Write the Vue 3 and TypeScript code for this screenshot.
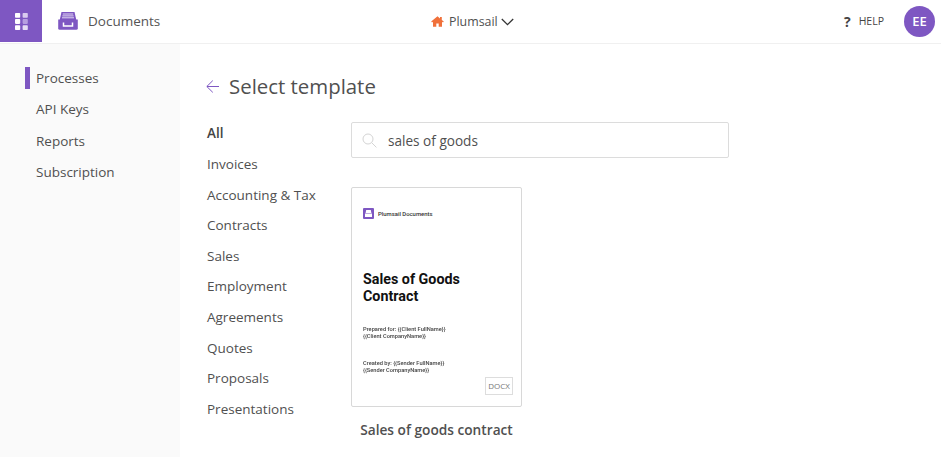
<script setup lang="ts">
const navItems: string[] = ['Processes', 'API Keys', 'Reports', 'Subscription']
const categories: string[] = ['All', 'Invoices', 'Accounting & Tax', 'Contracts', 'Sales', 'Employment', 'Agreements', 'Quotes', 'Proposals', 'Presentations']
</script>

<template>
  <div class="app">
    <header class="topbar">
      <div class="launcher">
        <svg width="13" height="17" viewBox="0 0 13 17">
          <rect x="0" y="0" width="5.2" height="4.8" rx="0.8" fill="#fff" />
          <rect x="0" y="6.1" width="5.2" height="4.8" rx="0.8" fill="#fff" />
          <rect x="0" y="12.2" width="5.2" height="4.8" rx="0.8" fill="#fff" />
          <rect x="7.6" y="0" width="5.2" height="4.8" rx="0.8" fill="#d9cbef" />
          <rect x="7.6" y="6.1" width="5.2" height="4.8" rx="0.8" fill="#b79fe0" />
          <rect x="7.6" y="12.2" width="5.2" height="4.8" rx="0.8" fill="#e6ddf5" />
        </svg>
      </div>
      <div class="brand">
        <svg width="20" height="18" viewBox="0 0 20 18">
          <path d="M3.5 0h13l1.8 8H1.7z" fill="#7e57c2" />
          <path d="M4.8 2h10.4M4.4 3.9h11.2M4 5.8h12" stroke="#e3d9f3" stroke-width="1" />
          <path d="M0.2 7.4h19.6v8.8a1.6 1.6 0 0 1-1.6 1.6H1.8a1.6 1.6 0 0 1-1.6-1.6z" fill="#7e57c2" />
          <path d="M5.5 10.6v3.4h9v-3.4" fill="none" stroke="#fff" stroke-width="1.5" />
        </svg>
        <span class="brand-name">Documents</span>
      </div>
      <div class="tenant">
        <svg width="13" height="11" viewBox="0 0 13 11">
          <path d="M6.5 0.3 0.2 5.6l0.8 1 1-0.8v5h3.3V7.4h2.4v3.4H11v-5l1 .8.8-1L10.8 3.9V1H9v1.4z" fill="#f0703a" />
        </svg>
        <span>Plumsail</span>
        <svg width="13" height="8" viewBox="0 0 13 8">
          <path d="M0.8 1 6.5 6.6 12.2 1" fill="none" stroke="#333" stroke-width="1.3" />
        </svg>
      </div>
      <div class="help">
        <span class="help-mark">?</span>
        <span class="help-text">HELP</span>
      </div>
      <div class="avatar">EE</div>
    </header>

    <div class="body">
      <aside class="sidebar">
        <a v-for="(item, i) in navItems" :key="item" class="nav-item" :class="{ active: i === 0 }">{{ item }}</a>
      </aside>
      <main class="main">
        <div class="title-row">
          <svg width="13" height="13" viewBox="0 0 13 13">
            <path d="M13 6.5H1M6.8 0.6 0.8 6.5l6 5.9" fill="none" stroke="#7e57c2" stroke-width="1" />
          </svg>
          <h1>Select template</h1>
        </div>
        <div class="columns">
          <ul class="categories">
            <li v-for="(c, i) in categories" :key="c" :class="{ current: i === 0 }">{{ c }}</li>
          </ul>
          <section class="results">
            <div class="search">
              <svg width="15" height="15" viewBox="0 0 15 15">
                <circle cx="6" cy="6" r="5" fill="none" stroke="#d4d4d4" stroke-width="1" />
                <path d="M9.7 9.7 14.4 14.4" stroke="#d4d4d4" stroke-width="1" />
              </svg>
              <span>sales of goods</span>
            </div>
            <article class="card">
              <div class="doc">
                <div class="doc-brand">
                  <span class="doc-logo">
                    <svg width="7" height="7" viewBox="0 0 7 7">
                      <path d="M1.2 0h4.6l.6 3H.6zM0 3.4h7V7H0z" fill="#fff" />
                    </svg>
                  </span>
                  <span>Plumsail Documents</span>
                </div>
                <div class="doc-title">Sales of Goods<br />Contract</div>
                <div class="doc-meta first">Prepared for: {{ '{{' }}Client FullName}}<br />{{ '{{' }}Client CompanyName}}</div>
                <div class="doc-meta second">Created by: {{ '{{' }}Sender FullName}}<br />{{ '{{' }}Sender CompanyName}}</div>
                <span class="badge">DOCX</span>
              </div>
              <div class="card-name">Sales of goods contract</div>
            </article>
          </section>
        </div>
      </main>
    </div>
  </div>
</template>

<style>
html, body { margin: 0; background: #fff; }
</style>

<style scoped>
.app {
  width: 941px;
  height: 457px;
  overflow: hidden;
  display: flex;
  flex-direction: column;
  font-family: "Open Sans", "Noto Sans", sans-serif;
  color: #505050;
  font-size: 13.5px;
}
.topbar {
  height: 42px;
  padding-bottom: 1px;
  flex: none;
  box-sizing: content-box;
  border-bottom: 1px solid #f0f0f0;
  display: flex;
  align-items: center;
}
.launcher {
  width: 42px;
  height: 42px;
  align-self: flex-start;
  background: #7e57c2;
  display: flex;
  align-items: center;
  justify-content: center;
}
.brand {
  margin-left: 16px;
  display: flex;
  align-items: center;
  gap: 10px;
  width: 373px;
}
.brand-name { font-size: 13.5px; color: #555; }
.tenant {
  display: flex;
  align-items: center;
  gap: 4px;
  font-size: 12.4px;
  color: #505050;
}
.tenant span { margin-left: 1px; }
.tenant svg:last-child { margin-left: -1px; margin-top: 1px; }
.help {
  margin-left: auto;
  display: flex;
  align-items: center;
  gap: 8px;
}
.help-mark { font-weight: 700; font-size: 14px; color: #444; }
.help-text { font-size: 10.5px; color: #444; }
.avatar {
  width: 31px;
  height: 31px;
  border-radius: 50%;
  margin: 0 6px 0 20px;
  background: #7e57c2;
  color: #fff;
  font-weight: 600;
  font-size: 13px;
  display: flex;
  align-items: center;
  justify-content: center;
}
.body { flex: 1; display: flex; min-height: 0; }
.sidebar {
  width: 180px;
  flex: none;
  background: #fafafa;
  padding-top: 23px;
  box-sizing: border-box;
  display: flex;
  flex-direction: column;
}
.nav-item {
  height: 22px;
  line-height: 22px;
  margin: 0 0 9.4px 25px;
  padding-left: 6px;
  border-left: 5px solid transparent;
  color: #505050;
}
.nav-item.active { border-left-color: #7e57c2; }
.main { flex: 1; padding: 26px 0 0 26px; }
.title-row { display: flex; align-items: center; gap: 10px; height: 32px; }
h1 { margin: 0; font-size: 20.4px; font-weight: 400; color: #505050; }
.columns { display: flex; margin-top: 20px; }
.categories {
  list-style: none;
  margin: 0;
  padding: 0 0 0 1px;
  width: 144px;
  margin-top: 0.4px;
}
.categories li { height: 22px; line-height: 22px; margin-bottom: 8.6px; white-space: nowrap; }
.categories li.current { font-weight: 600; color: #444; }
.search {
  width: 378px;
  height: 36px;
  box-sizing: border-box;
  border: 1px solid #dcdcdc;
  border-radius: 2px;
  display: flex;
  align-items: center;
  gap: 11px;
  padding-left: 10px;
  color: #505050;
  font-size: 13.6px;
}
.card { margin-top: 29px; width: 171px; }
.doc {
  position: relative;
  width: 171px;
  height: 220px;
  box-sizing: border-box;
  border: 1px solid #d8d8d8;
  border-radius: 2px;
  padding: 20px 11px 0;
  font-family: Roboto, sans-serif;
}
.doc-brand { display: flex; align-items: center; gap: 4px; font-size: 5.9px; font-weight: 500; color: #333; }
.doc-logo {
  width: 11px;
  height: 11px;
  border-radius: 1px;
  background: #7e57c2;
  display: flex;
  align-items: center;
  justify-content: center;
}
.doc-title { margin-top: 52px; font-size: 14.3px; line-height: 17px; font-weight: 700; color: #111; }
.doc-meta { font-size: 5.7px; line-height: 7px; color: #444; font-weight: 500; filter: blur(0.2px); }
.doc-meta.first { margin-top: 21px; }
.doc-meta.second { margin-top: 19.5px; }
.badge {
  position: absolute;
  right: 8px;
  bottom: 11px;
  width: 28px;
  height: 18px;
  box-sizing: border-box;
  border: 1px solid #ddd;
  font-size: 8px;
  line-height: 16px;
  text-align: center;
  color: #777;
  font-family: "Open Sans", sans-serif;
}
.card-name { margin-top: 13px; text-align: center; font-weight: 600; font-size: 13.7px; color: #505050; }
</style>
